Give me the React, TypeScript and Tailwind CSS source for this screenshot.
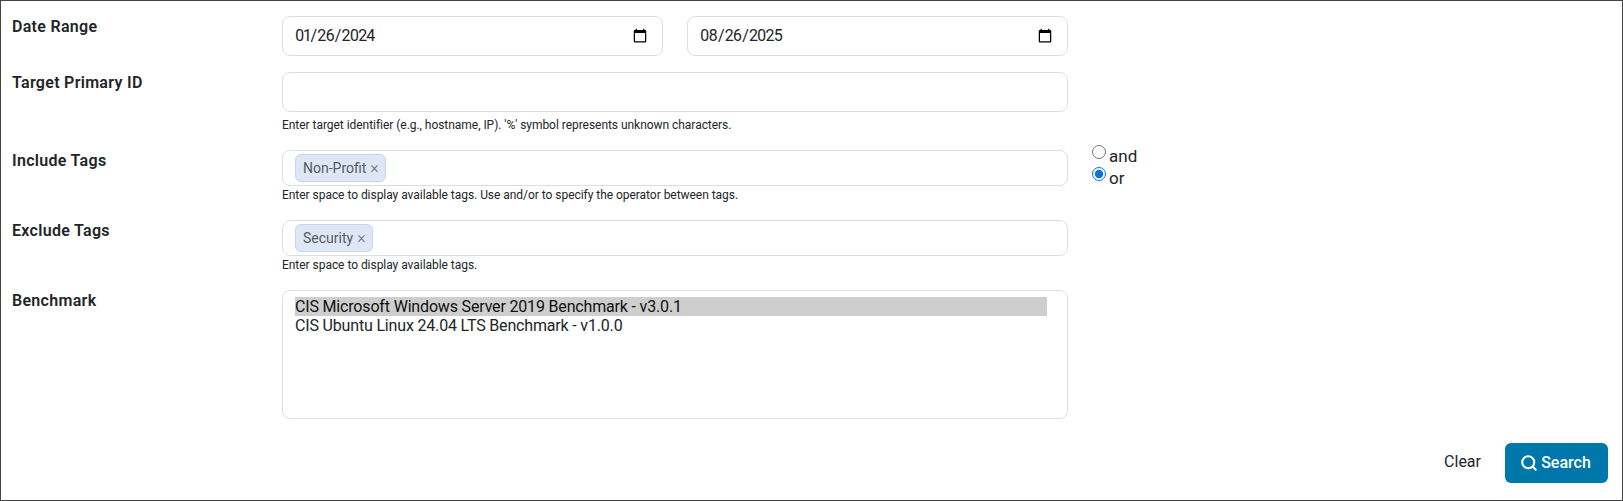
import React from 'react';
import { Search } from 'lucide-react';

const inputClass = 'w-full h-10 pl-[11px] pr-3 bg-white border border-[#dedede] rounded-lg text-[16px] text-[#212529] outline-none proportional-nums tracking-[-0.85px]';

const Label: React.FC<{ children: React.ReactNode }> = ({ children }) => (
    <label className="block pt-px text-[16px] leading-[20px] font-semibold tracking-[0.3px] text-[#212529]">{children}</label>
);

const Help: React.FC<{ children: React.ReactNode; className?: string }> = ({ children, className }) => (
    <div className={`text-[12px] leading-[16px] tracking-[-0.04px] text-[#212529] ${className ?? 'mt-px'}`}>{children}</div>
);

const TagInput: React.FC<{ tag: string }> = ({ tag }) => (
    <div className="h-9 flex items-center px-3 bg-white border border-[#dedede] rounded-lg">
        <span className="h-7 flex items-center gap-[4px] pl-[7px] pr-[6px] bg-[#dfe7f7] border border-[#c6d4ef] rounded-md text-[14px] text-[#555b62]">
            {tag}
            <span className="text-[16px] font-light leading-none text-[#6b7178]">×</span>
        </span>
    </div>
);

const App: React.FC = () => {
    return (
        <div className="h-[501px] border border-[#444444] flex flex-col bg-white font-['Roboto',sans-serif] text-[#212529]">
            <form className="flex flex-col pt-[15px] pl-[11px]">
                <div className="grid grid-cols-[270px_786px] items-start h-[56px]">
                    <Label>Date Range</Label>
                    <div className="grid grid-cols-2 gap-[24px]">
                        <input type="date" defaultValue="2024-01-26" className={inputClass} />
                        <input type="date" defaultValue="2025-08-26" className={inputClass} />
                    </div>
                </div>
                <div className="grid grid-cols-[270px_786px] items-start h-[78px]">
                    <Label>Target Primary ID</Label>
                    <div>
                        <input type="text" className={inputClass} />
                        <Help className="mt-[5px]">Enter target identifier (e.g., hostname, IP). '%' symbol represents unknown characters.</Help>
                    </div>
                </div>
                <div className="grid grid-cols-[270px_786px_auto] items-start h-[70px]">
                    <Label>Include Tags</Label>
                    <div>
                        <TagInput tag="Non-Profit" />
                        <Help>Enter space to display available tags. Use and/or to specify the operator between tags.</Help>
                    </div>
                    <div className="pl-6 -mt-[5px] text-[17px] leading-[22px]">
                        <label className="flex items-center gap-[3px]">
                            <input type="radio" name="op" className="m-0 -mt-[8px] w-[14px] h-[14px]" />
                            and
                        </label>
                        <label className="flex items-center gap-[3px]">
                            <input type="radio" name="op" defaultChecked className="m-0 -mt-[8px] w-[14px] h-[14px] accent-[#0b74d1]" />
                            or
                        </label>
                    </div>
                </div>
                <div className="grid grid-cols-[270px_786px] items-start h-[70px]">
                    <Label>Exclude Tags</Label>
                    <div>
                        <TagInput tag="Security" />
                        <Help>Enter space to display available tags.</Help>
                    </div>
                </div>
                <div className="grid grid-cols-[270px_786px] items-start">
                    <Label>Benchmark</Label>
                    <select
                        multiple
                        defaultValue={['win2019']}
                        className="w-full h-[129px] pl-3 pr-5 py-[6px] bg-white border border-[#dedede] rounded-lg text-[16px] tracking-[-0.17px] text-[#212529] outline-none overflow-hidden"
                    >
                        <option value="win2019">CIS Microsoft Windows Server 2019 Benchmark - v3.0.1</option>
                        <option value="ubuntu2404">CIS Ubuntu Linux 24.04 LTS Benchmark - v1.0.0</option>
                    </select>
                </div>
            </form>
            <div className="flex items-center justify-end mt-[24px] pr-[14px] gap-[24px]">
                <button type="button" className="pb-[2px] text-[16px] text-[#212529]">Clear</button>
                <button type="button" className="h-10 w-[103px] pb-px pr-[2px] flex items-center justify-center gap-[3px] bg-[#0077aa] rounded-md text-white text-[16px] font-medium">
                    <Search size={18} strokeWidth={2.75} />
                    Search
                </button>
            </div>
        </div>
    );
};

export default App;
